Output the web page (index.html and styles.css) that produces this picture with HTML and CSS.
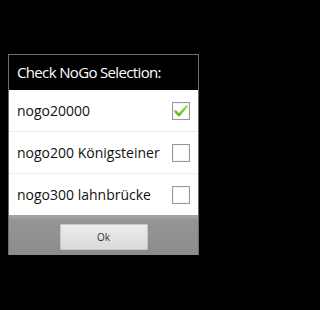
FILE: index.html
```html
<!DOCTYPE html>
<html>
<head>
<meta charset="utf-8">
<link rel="stylesheet" href="styles.css">
</head>
<body>
<div class="dialog">
  <div class="title">Check NoGo Selection:</div>
  <div class="list">
    <div class="row">
      <span class="label">nogo20000</span>
      <span class="box">
        <svg width="16" height="16" viewBox="0 0 16 16"><defs><linearGradient id="g" x1="0" y1="0" x2="0" y2="1"><stop offset="0" stop-color="#9be04a"/><stop offset="1" stop-color="#5fb516"/></linearGradient></defs><path d="M2.5 8.5 L6 12 L13.5 3.5" fill="none" stroke="url(#g)" stroke-width="2.6" stroke-linecap="round" stroke-linejoin="round"/></svg>
      </span>
    </div>
    <div class="row">
      <span class="label">nogo200 Königsteiner</span>
      <span class="box"></span>
    </div>
    <div class="row last">
      <span class="label">nogo300 lahnbrücke</span>
      <span class="box"></span>
    </div>
  </div>
  <div class="bar">
    <div class="btn">Ok</div>
  </div>
</div>
</body>
</html>
```
FILE: styles.css
```css
html, body { margin: 0; padding: 0; background: #000; }
body { width: 207px; height: 310px; padding-top: 54px; box-sizing: border-box; font-family: "Open Sans", "DejaVu Sans", sans-serif; }
.dialog { margin-left: 8px; width: 191px; border: 1px solid #6e6e6e; border-bottom: none; box-sizing: border-box; }
.title { height: 35px; background: #000; color: #fff; font-size: 15px; letter-spacing: -0.65px; line-height: 35px; padding-left: 8px; white-space: nowrap; }
.list { background: #fff; }
.row { height: 42px; display: flex; align-items: center; justify-content: space-between; padding: 0 8px 0 8px; border-bottom: 1px solid #ededed; box-sizing: border-box; }
.row.last { border-bottom: none; height: 41px; }
.label { font-size: 14px; color: #111; white-space: nowrap; }
.box { width: 16px; height: 16px; border: 1px solid #9a9a9a; background: #fff; display: flex; align-items: center; justify-content: center; box-shadow: inset 0 0 0 1px #f4f4f4; }
.box svg { display: block; }
.bar { height: 40px; background: linear-gradient(#a3a3a3 0, #a3a3a3 3px, #959595 4px, #8c8c8c 100%); display: flex; justify-content: center; align-items: center; box-sizing: border-box; padding-top: 4px; }
.btn { width: 88px; height: 26px; background: linear-gradient(#ececec, #dadada); border: 1px solid #c8c8c8; box-sizing: border-box; font-size: 10px; color: #333; display: flex; align-items: center; justify-content: center; border-radius: 1px; }
```
